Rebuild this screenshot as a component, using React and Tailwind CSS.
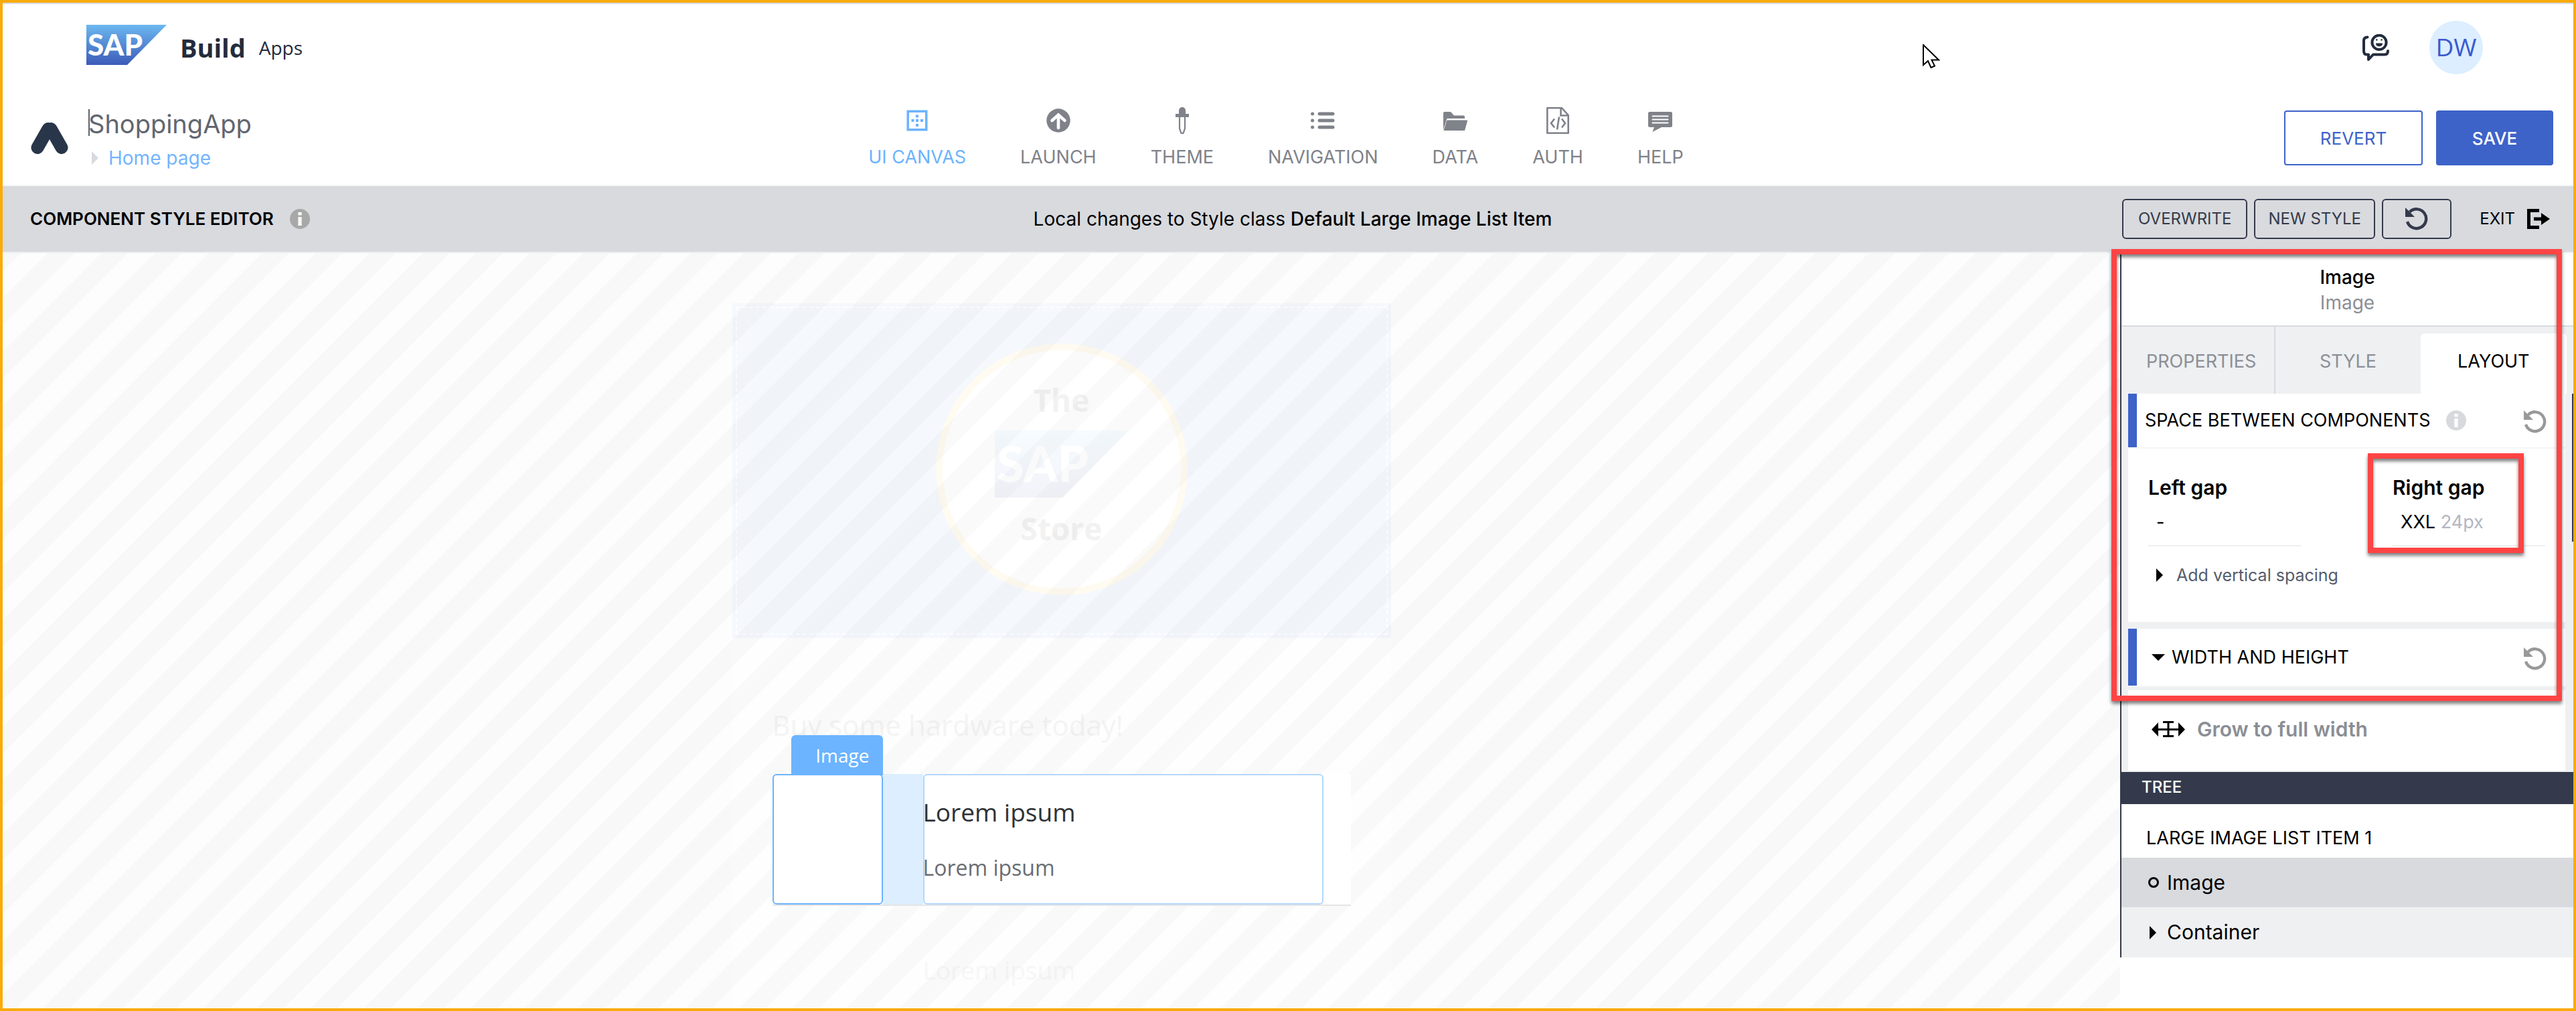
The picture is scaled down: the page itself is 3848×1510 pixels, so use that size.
import React from "react";

const INTER = "font-['Inter','Open_Sans',sans-serif]";
const OPEN = "font-['Open_Sans','Noto_Sans',sans-serif]";

function SapLogo({ className, top, bottom, id, ink = "#ffffff" }) {
  return (
    <svg viewBox="0 0 120 60" className={className} role="img" aria-label="SAP">
      <defs>
        <linearGradient id={id} x1="0" y1="0" x2="0" y2="1">
          <stop offset="0" stopColor={top} />
          <stop offset="1" stopColor={bottom} />
        </linearGradient>
      </defs>
      <path d="M0 0H120L61 60H0Z" fill={`url(#${id})`} />
      <text x="2" y="46" fontSize="44" fontWeight="900" fill={ink} fontFamily="Lato, sans-serif">
        SAP
      </text>
    </svg>
  );
}

function UndoIcon({ className }) {
  return (
    <svg viewBox="0 0 34 34" className={className} aria-hidden="true">
      <path d="M0 0L14 14H0Z" fill="currentColor" />
      <path d="M3 21A14.4 14.4 0 1 0 6.5 6.6" fill="none" stroke="currentColor" strokeWidth="4.4" />
    </svg>
  );
}

function InfoIcon({ className }) {
  return (
    <svg viewBox="0 0 30 30" className={className} aria-hidden="true">
      <circle cx="15" cy="15" r="15" fill="currentColor" />
      <path d="M12.3 5h5.4v4.6h-5.4zM12.3 12h5.4v13h-5.4z" fill="#fff" fillOpacity="0.9" />
    </svg>
  );
}

function TriangleRight({ className }) {
  return (
    <svg viewBox="0 0 10 20" className={className} aria-hidden="true">
      <path d="M0 0L10 10L0 20Z" fill="currentColor" />
    </svg>
  );
}

const icons = {
  canvas: (
    <svg viewBox="0 0 40 40" className="size-10" fill="currentColor" aria-hidden="true">
      <path d="M4.5 4.5h31v31h-31zM8 8v24h24V8z" fillRule="evenodd" />
      <path d="M18 11.5h4v4h-4zM18 18h4v4h-4zM18 25h4v4h-4zM11.500 18h4v4h-4zM25 18h4v4h-4z" />
    </svg>
  ),
  launch: (
    <svg viewBox="0 0 40 40" className="size-10" aria-hidden="true">
      <circle cx="20" cy="20" r="17.700" fill="currentColor" />
      <path d="M20 31V13M10.500 20L20 11.500L29.500 20" fill="none" stroke="#fff" strokeWidth="4.600" strokeLinecap="round" strokeLinejoin="miter" />
    </svg>
  ),
  theme: (
    <svg viewBox="0 0 40 40" className="size-10" fill="currentColor" aria-hidden="true">
      <path d="M15 10V5a5 5 0 0 1 10 0v5h5v5H10v-5z" />
      <path d="M16 14V32L18.500 39h3L24 32V14" fill="#fff" stroke="currentColor" strokeWidth="2.200" />
      <path d="M10 10h20v5H10z" />
    </svg>
  ),
  navigation: (
    <svg viewBox="0 0 40 40" className="size-10" stroke="currentColor" strokeWidth="5" strokeLinecap="round" aria-hidden="true">
      <path d="M4.500 10h.1M4.500 20h.1M4.500 30h.1M15 10h20M15 20h20M15 30h20" />
    </svg>
  ),
  data: (
    <svg viewBox="0 0 40 40" className="size-10" fill="currentColor" aria-hidden="true">
      <path d="M2 9a2 2 0 0 1 2-2h9l5 5.500h14a2 2 0 0 1 2 2V17H7.500L2 34z" />
      <path d="M8.500 19.500H37a1 1 0 0 1 1 1.300L34 35H2.500L7 20.500a1.500 1.500 0 0 1 1.500-1z" />
    </svg>
  ),
  auth: (
    <svg viewBox="0 0 40 40" className="size-10" fill="none" stroke="currentColor" strokeWidth="2.600" aria-hidden="true">
      <path d="M4.300 1.300H26L35.700 12V38.700H4.300Z" strokeLinejoin="round" />
      <path d="M24.500 1.500V12.500H35.500" />
      <path d="M15 17.500L10 24L15 30.500M26 17.500L31 24L26 30.500M22 14.500L19 33.500" />
    </svg>
  ),
  help: (
    <svg viewBox="0 0 40 40" className="size-10" fill="currentColor" aria-hidden="true">
      <path d="M4.500 7h31A2.500 2.500 0 0 1 38 9.500V27.500A2.500 2.500 0 0 1 35.500 30H22L8.500 37L11 30H4.500A2.500 2.500 0 0 1 2 27.500V9.500A2.500 2.500 0 0 1 4.500 7z" />
      <path d="M8.500 13.500h23M8.500 18.500h23M8.500 23.500h23" stroke="#fff" strokeWidth="2" strokeLinecap="round" />
    </svg>
  ),
};

const navItems = [
  { label: "UI CANVAS", icon: icons.canvas, active: true },
  { label: "LAUNCH", icon: icons.launch },
  { label: "THEME", icon: icons.theme },
  { label: "NAVIGATION", icon: icons.navigation },
  { label: "DATA", icon: icons.data },
  { label: "AUTH", icon: icons.auth },
  { label: "HELP", icon: icons.help },
];

function Header() {
  return (
    <header className="relative border-t-2 border-b-2 border-t-[#d8dade] border-b-[#f4f5f7] bg-white">
      <div className="flex h-[130px] items-center pr-[135px] pl-[125px]">
        <SapLogo id="sap-header" className="mb-2 h-[60px] w-[120px]" top="#6cb8f0" bottom="#3c5bb8" />
        <span className={`${OPEN} ml-5 text-[38px] leading-[60px] font-bold text-[#232c3d]`}>Build</span>
        <span className={`${OPEN} ml-5 text-[28px] leading-[60px] text-[#232c3d]`}>Apps</span>
        <button type="button" aria-label="Feedback" className="ml-auto text-[#232c3d]">
          <svg viewBox="0 0 40 40" className="size-10" fill="none" stroke="currentColor" strokeWidth="4" strokeLinecap="round" strokeLinejoin="round" aria-hidden="true">
            <path d="M7.500 4.500C4 4.500 2 6.500 2 10V25C2 28.500 3.500 30.500 6.500 30.500H9V38L16 30.500H33C36.500 30.500 38 28.500 38 25" />
            <circle cx="25" cy="12.300" r="10.600" />
            <path d="M20 13.500H30C30 17 28 18.300 25 18.300S20 17 20 13.500Z" fill="currentColor" stroke="none" />
            <path d="M21.300 8.500h.01M28.600 8.500h.01" strokeWidth="2.600" />
          </svg>
        </button>
        <button type="button" className={`${OPEN} ml-[60px] size-20 rounded-full bg-[#dceeff] pb-1 text-[37px] leading-none text-[#3a59d1]`}>
          DW
        </button>
      </div>
      <svg viewBox="0 0 26 36" className="absolute top-[60px] left-[74.7%] h-9 w-[26px]" aria-hidden="true">
        <path d="M1 1V31L8 25L12.500 35L18 32.500L13.500 23.500H24Z" fill="#fff" stroke="#000" strokeWidth="2" />
      </svg>
      <div className="grid h-[140px] grid-cols-[1fr_auto_1fr] items-center pr-[30px] pl-[42px]">
        <div className="flex items-center">
          <svg viewBox="0 0 56 48" className="h-12 w-14 shrink-0" aria-hidden="true">
            <path d="M10 38.500L26 10.500M46 38.500L30 10.500" stroke="#29364a" strokeWidth="19" strokeLinecap="round" />
            <path d="M24 8H32L31 20L28 24L25 20Z" fill="#29364a" />
          </svg>
          <div className="ml-[30px] pt-1">
            <input
              aria-label="App name"
              defaultValue="ShoppingApp"
              className={`${INTER} block h-11 w-[420px] bg-[linear-gradient(#5c6370,#5c6370)] bg-[length:2px_40px] bg-no-repeat text-[38px] leading-[44px] text-[#62666f] outline-none`}
            />
            <a href="#home" className={`${INTER} mt-[11px] ml-[5px] flex h-9 items-center gap-[15px] text-[28px] leading-9 text-[#74b4fd]`}>
              <TriangleRight className="h-5 w-[10px] text-[#d8dade]" />
              Home page
            </a>
          </div>
        </div>
        <nav className="mr-12 flex gap-[81px]">
          {navItems.map(({ label, icon, active }) => (
            <a
              key={label}
              href="#"
              className={`${INTER} flex flex-col items-center gap-[17px] text-[27px] leading-9 ${active ? "text-[#6cb3fd]" : "text-[#7f8289]"}`}
            >
              {icon}
              {label}
            </a>
          ))}
        </nav>
        <div className={`${INTER} flex justify-end gap-5 text-[26px]`}>
          <button type="button" className="h-[82px] w-[207px] rounded-[4px] border-2 border-[#3d63c9] bg-white text-[#3d63c9]">
            REVERT
          </button>
          <button type="button" className="h-[82px] w-[175px] rounded-[4px] bg-[#3d63c9] font-medium text-white">
            SAVE
          </button>
        </div>
      </div>
    </header>
  );
}

function EditorBar() {
  return (
    <div className={`${INTER} grid grid-cols-[1fr_auto_1fr] items-center border-b-2 border-[#eceef0] bg-[#d8dade] py-[19px] pr-[35px] pl-[41px]`}>
      <div className="flex items-center gap-6">
        <h1 className="text-[26px] leading-9 font-semibold text-black">COMPONENT STYLE EDITOR</h1>
        <button type="button" aria-label="About the style editor">
          <InfoIcon className="size-[30px] text-[#a8a8a8]" />
        </button>
      </div>
      <p className="ml-2 text-[28px] leading-9 text-black">
        Local changes to Style class <b className="font-medium">Default Large Image List Item</b>
      </p>
      <div className="flex items-center justify-end gap-[10px] text-[24px] text-[#343a4b]">
        <button type="button" className="h-[60px] w-[187px] rounded-[6px] border-2 border-[#343a4b]">OVERWRITE</button>
        <button type="button" className="h-[60px] w-[181px] rounded-[6px] border-2 border-[#343a4b]">NEW STYLE</button>
        <button type="button" aria-label="Undo" className="flex h-[60px] w-[104px] items-center justify-center rounded-[6px] border-2 border-[#343a4b]">
          <UndoIcon className="size-[34px]" />
        </button>
        <button type="button" className="ml-8 flex items-center gap-[18px] text-black">
          EXIT
          <svg viewBox="0 0 34 30" className="h-[30px] w-[34px]" aria-hidden="true">
            <path d="M18 2.500H2.500V27.500H18" fill="none" stroke="currentColor" strokeWidth="5" />
            <path d="M10 12.500H21V6L34 15L21 24V17.500H10Z" fill="currentColor" />
          </svg>
        </button>
      </div>
    </div>
  );
}

function Canvas() {
  return (
    <main className={`${OPEN} relative flex-1 overflow-hidden bg-[#fdfdfd]`}>
      <div className="mx-auto mt-[75px] flex h-full w-[984px] flex-col bg-[#fefefe]">
        <div className="relative flex h-[500px] items-center justify-center bg-[#f5f8fd] pb-[5px]">
          <div className="absolute inset-[5px] border-2 border-dashed border-white" />
          <div className="flex size-[376px] flex-col items-center rounded-full border-[10px] border-[#fffbf1] bg-white pt-11 text-[46px] leading-[60px] font-bold text-[#f2f2f2]">
            <span>The</span>
            <SapLogo id="sap-store" className="my-4 h-[100px] w-[200px]" top="#f6fcff" bottom="#f3f3fa" />
            <span>Store</span>
          </div>
        </div>
        <div className="mt-[100px] px-[60px]">
          <h2 className="text-[42px] leading-[60px] text-[#f4f4f4]">Buy some hardware today!</h2>
          <div className="relative z-10 mt-[43px] flex h-[197px] border-b-2 border-[#e5e5e5] bg-white">
            <div className="relative w-[165px]">
              <span className="absolute right-0 bottom-full -mb-[2px] rounded-t-[6px] bg-[#6cb4ff] py-3 pr-5 pl-9 text-[28px] leading-9 text-white">
                Image
              </span>
              <div className="h-full rounded-[6px] border-2 border-[#6cb4fb]" />
            </div>
            <div className="w-[60px] bg-[#dceeff]" />
            <div className="w-[598px] rounded-[6px] pt-8 outline-2 -outline-offset-2 outline-[#b2d7fe]">
              <p className="text-[37px] leading-[50px] text-[#2f3237]">Lorem ipsum</p>
              <p className="mt-9 text-[32px] leading-[44px] text-[#6a6d72]">Lorem ipsum</p>
            </div>
          </div>
          <p className="mt-[71px] pl-[225px] text-[37px] leading-[50px] text-[#f7f7f7]">Lorem ipsum</p>
        </div>
      </div>
      <div className="pointer-events-none absolute inset-0 bg-[linear-gradient(135deg,rgba(0,0,0,0.018)_25%,transparent_25%,transparent_50%,rgba(0,0,0,0.018)_50%,rgba(0,0,0,0.018)_75%,transparent_75%)] bg-[length:80px_80px] bg-[position:-12px_0px]" />
    </main>
  );
}

function Frame({ className }) {
  return (
    <div
      className={`pointer-events-none absolute z-20 border-8 border-[#fe4444] shadow-[0_4px_5px_rgba(0,0,0,0.5),inset_0_4px_5px_rgba(0,0,0,0.5)] ${className}`}
    />
  );
}

function Inspector() {
  return (
    <aside className={`${INTER} relative w-[677px] shrink-0 bg-white`}>
      <Frame className="top-[-6px] right-[17px] left-[-13px] h-[675px]" />
      <div className="border-l-2 border-[#343a4b]">
        <div className="border-b-2 border-[#d8dade] pt-[17px] pb-[15px] text-center text-[28px] leading-[38px]">
          <p className="font-medium text-black">Image</p>
          <p className="text-[#8c8f96]">Image</p>
        </div>
        <div role="tablist" className="grid grid-cols-3 bg-[#eef0f2] px-[10px] text-[27px] leading-[90px]">
          <button type="button" role="tab" aria-selected="false" className="pt-[7px] pb-[3px] text-[#8c8f96]">PROPERTIES</button>
          <button type="button" role="tab" aria-selected="false" className="border-l-2 border-[#d8dade] pt-[7px] pb-[3px] text-[#8c8f96]">STYLE</button>
          <button type="button" role="tab" aria-selected="true" className="mt-[10px] rounded-t-[6px] bg-white pb-[6px] leading-[84px] text-black">LAYOUT</button>
        </div>
        <div className="relative bg-[#eef0f2] pr-3 pb-[2px] pl-[10px]">
          <div className="absolute top-0 right-0 h-[221px] w-[2px] bg-[#343a4b]" />
          <section className="bg-white">
            <div className="flex h-[82px] items-center border-b-2 border-[#f5f6f7] pr-7">
              <div className="h-full w-[13px] bg-[#3d63c9]" />
              <h2 className="ml-3 text-[27px] leading-9 text-black">SPACE BETWEEN COMPONENTS</h2>
              <button type="button" aria-label="About spacing" className="ml-6">
                <InfoIcon className="size-[30px] text-[#d8d9dd]" />
              </button>
              <button type="button" aria-label="Reset spacing" className="ml-auto">
                <UndoIcon className="mt-1 size-[34px] text-[#999999]" />
              </button>
            </div>
            <div className="px-[30px] pt-10 pb-[52px]">
              <div className="flex justify-between">
                <div className="w-[228px]">
                  <label htmlFor="left-gap" className="block text-[30px] leading-9 font-semibold text-black">Left gap</label>
                  <button id="left-gap" type="button" className="h-[70px] w-full border-b-2 border-[#eeeff1] px-3 text-left text-[27px] text-black">-</button>
                </div>
                <div className="relative w-[228px]">
                  <label htmlFor="right-gap" className="block text-[30px] leading-9 font-semibold text-black">Right gap</label>
                  <button id="right-gap" type="button" className="h-[70px] w-full border-b-2 border-[#eeeff1] px-3 text-left text-[27px] text-black">
                    XXL <span className="text-[#b4b7c3]">24px</span>
                  </button>
                  <Frame className="top-[-33px] right-8 left-[-37px] h-[149px]" />
                </div>
              </div>
              <button type="button" className="mt-[25px] ml-3 flex items-center gap-5 text-[25px] leading-9 text-[#555c6b]">
                <TriangleRight className="h-5 w-[10px] text-black" />
                Add vertical spacing
              </button>
            </div>
          </section>
          <section className="mt-[10px]">
            <div className="flex h-[87px] items-center border-b-2 border-[#f5f6f7] bg-white pr-7">
              <div className="h-full w-[13px] bg-[#3d63c9]" />
              <button type="button" className="ml-[22px] flex items-center gap-[10px] text-[27px] leading-9 text-black">
                <svg viewBox="0 0 20 10" className="h-[10px] w-5" aria-hidden="true">
                  <path d="M0 0H20L10 10Z" fill="currentColor" />
                </svg>
                WIDTH AND HEIGHT
              </button>
              <button type="button" aria-label="Reset size" className="ml-auto">
                <UndoIcon className="mt-1 size-[34px] text-[#999999]" />
              </button>
            </div>
            <div className="mt-[5px] bg-white px-[35px] pt-10 pb-[44px]">
              <button type="button" className="flex items-center gap-[18px] text-[30px] leading-9 font-semibold text-[#8b8e95]">
                <svg viewBox="0 0 50 24" className="h-6 w-[50px] text-black" aria-hidden="true">
                  <path d="M0 12.500L10 2V23ZM50 12.500L40 2V23Z" fill="currentColor" />
                  <path d="M8 12.500H42M25 1.500V22.500M17 1.500H33M17 22.500H33" stroke="currentColor" strokeWidth="3" />
                </svg>
                Grow to full width
              </button>
            </div>
          </section>
        </div>
        <h2 className="bg-[#343a4b] pt-[5px] pb-[7px] pl-[30px] text-[24px] leading-9 font-medium text-white">TREE</h2>
        <p className="pt-[33px] pb-[11px] pl-[37px] text-[27px] leading-9 text-black">LARGE IMAGE LIST ITEM 1</p>
        <ul className="text-[30px] text-black">
          <li>
            <button type="button" className="flex h-[74px] w-full items-center bg-[#d8dade] pl-10">
              <svg viewBox="0 0 16 16" className="size-4" aria-hidden="true">
                <circle cx="8" cy="8" r="6.500" fill="none" stroke="currentColor" strokeWidth="3" />
              </svg>
              <span className="ml-3">Image</span>
            </button>
          </li>
          <li>
            <button type="button" className="flex h-[75px] w-full items-center bg-[#eff0f2] pl-[42px]">
              <TriangleRight className="h-5 w-[10px]" />
              <span className="ml-4">Container</span>
            </button>
          </li>
        </ul>
      </div>
    </aside>
  );
}

export default function App() {
  return (
    <div className="flex min-h-screen flex-col border-4 border-[#f9ab08] bg-white">
      <Header />
      <EditorBar />
      <div className="flex flex-1">
        <Canvas />
        <Inspector />
      </div>
    </div>
  );
}
